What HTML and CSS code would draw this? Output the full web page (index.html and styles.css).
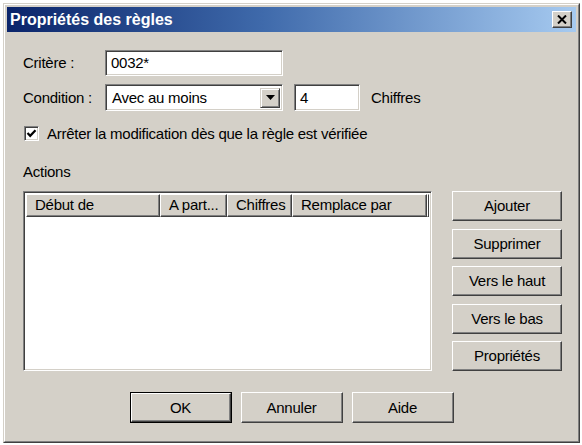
FILE: index.html
```html
<!DOCTYPE html>
<html lang="fr">
<head>
<meta charset="utf-8">
<title>Propriétés des règles</title>
<link rel="stylesheet" href="styles.css">
</head>
<body>
<div class="dialog">
  <div class="frame">
    <div class="titlebar">
      <span class="title">Propriétés des règles</span>
      <span class="close">
        <svg width="10" height="9" viewBox="0 0 10 9"><path d="M1 0.5 L9 8.5 M9 0.5 L1 8.5" stroke="#000" stroke-width="2" fill="none"/></svg>
      </span>
    </div>
    <div class="content">
      <div class="row row-critere">
        <span class="label">Critère :</span>
        <span class="field field-wide">0032*</span>
      </div>
      <div class="row row-condition">
        <span class="label">Condition :</span>
        <span class="field combo">
          <span class="combo-text">Avec au moins</span>
          <span class="combo-btn">
            <svg width="9" height="5" viewBox="0 0 9 5"><path d="M0 0 H9 L4.5 5 Z" fill="#000"/></svg>
          </span>
        </span>
        <span class="field field-num">4</span>
        <span class="unit">Chiffres</span>
      </div>
      <div class="row row-check">
        <span class="checkbox">
          <svg width="11" height="11" viewBox="0 0 11 11"><path d="M1.5 5 L4.2 7.8 L9.5 2.3" stroke="#000" stroke-width="2.2" fill="none"/></svg>
        </span>
        <span class="check-label">Arrêter la modification dès que la règle est vérifiée</span>
      </div>
      <div class="section-label">Actions</div>
      <div class="main">
        <div class="listview">
          <div class="header">
            <span class="col col1">Début de</span>
            <span class="col col2">A part...</span>
            <span class="col col3">Chiffres</span>
            <span class="col col4">Remplace par</span>
            <span class="col col-rest"></span>
          </div>
          <div class="list-body"></div>
        </div>
        <div class="side-buttons">
          <span class="btn side">Ajouter</span>
          <span class="btn side">Supprimer</span>
          <span class="btn side">Vers le haut</span>
          <span class="btn side">Vers le bas</span>
          <span class="btn side">Propriétés</span>
        </div>
      </div>
      <div class="bottom-buttons">
        <span class="btn bottom default"><span class="btn-inner">OK</span></span>
        <span class="btn bottom">Annuler</span>
        <span class="btn bottom">Aide</span>
      </div>
    </div>
  </div>
</div>
</body>
</html>
```

FILE: styles.css
```css
* { box-sizing: border-box; }

html, body {
  margin: 0;
  padding: 0;
  background: #ffffff;
}

body {
  font-family: "Liberation Sans", Arial, sans-serif;
  font-size: 15px;
  letter-spacing: -0.25px;
  color: #000;
}

.dialog {
  margin: 3px 0 0 3px;
  width: 577px;
  height: 440px;
  border: 1px solid;
  border-color: #d4d0c8 #404040 #404040 #d4d0c8;
  background: #d4d0c8;
}

.frame {
  height: 100%;
  border: 1px solid;
  border-color: #ffffff #808080 #808080 #ffffff;
  padding: 2px;
  display: flex;
  flex-direction: column;
}

.titlebar {
  height: 25px;
  flex: none;
  background: linear-gradient(to right, #0a246a 0%, #3f6aab 45%, #a6caf0 100%);
  display: flex;
  align-items: center;
  justify-content: space-between;
  padding: 0 4px 0 3px;
}

.title {
  color: #fff;
  font-weight: bold;
  font-size: 16px;
  letter-spacing: 0;
  line-height: 18px;
}

.close {
  width: 20px;
  height: 17px;
  background: #d4d0c8;
  border: 1px solid;
  border-color: #ffffff #404040 #404040 #ffffff;
  box-shadow: inset -1px -1px 0 #808080;
  display: flex;
  align-items: center;
  justify-content: center;
}

.content {
  flex: 1;
  padding: 18px 0 0 16px;
  display: flex;
  flex-direction: column;
}

.row {
  display: flex;
  align-items: center;
}

.label {
  width: 82px;
  line-height: 16px;
}

.field {
  background: #fff;
  border: 1px solid;
  border-color: #808080 #ffffff #ffffff #808080;
  box-shadow: inset 1px 1px 0 #404040, inset -1px -1px 0 #d4d0c8;
  display: flex;
  align-items: center;
  padding-left: 5px;
  line-height: 16px;
}

.row-critere { height: 26px; }
.row-critere .field { height: 26px; }
.field-wide { width: 178px; }

.row-condition { height: 27px; margin-top: 8px; }
.combo {
  width: 178px;
  height: 27px;
  padding-left: 6px;
  padding-right: 2px;
  justify-content: space-between;
}
.combo-btn {
  width: 20px;
  height: 20px;
  background: #d4d0c8;
  border: 1px solid;
  border-color: #d4d0c8 #404040 #404040 #d4d0c8;
  box-shadow: inset 1px 1px 0 #ffffff, inset -1px -1px 0 #808080;
  display: flex;
  align-items: center;
  justify-content: center;
}
.field-num {
  width: 66px;
  height: 27px;
  margin-left: 11px;
}
.unit { margin-left: 11px; line-height: 16px; }

.row-check { height: 19px; margin-top: 13px; padding-left: 1px; }
.checkbox {
  width: 15px;
  height: 15px;
  background: #fff;
  border: 1px solid;
  border-color: #808080 #ffffff #ffffff #808080;
  box-shadow: inset 1px 1px 0 #404040, inset -1px -1px 0 #d4d0c8;
  display: flex;
  align-items: center;
  justify-content: center;
}
.check-label { margin-left: 8px; line-height: 16px; }

.section-label {
  margin-top: 21px;
  line-height: 16px;
  height: 16px;
}

.main {
  margin-top: 11px;
  height: 180px;
  display: flex;
}

.listview {
  width: 409px;
  height: 180px;
  background: #fff;
  border: 1px solid;
  border-color: #808080 #ffffff #ffffff #808080;
  box-shadow: inset 1px 1px 0 #404040, inset -1px -1px 0 #d4d0c8;
  padding: 2px;
  display: flex;
  flex-direction: column;
}

.header {
  display: flex;
  height: 23px;
  flex: none;
}

.col {
  height: 23px;
  background: #d4d0c8;
  border: 1px solid;
  border-color: #ffffff #404040 #404040 #ffffff;
  box-shadow: inset -1px -1px 0 #808080;
  padding-left: 8px;
  line-height: 20px;
  white-space: nowrap;
  overflow: hidden;
}
.col1 { width: 134px; }
.col2 { width: 67px; }
.col3 { width: 65px; }
.col4 { width: 135px; }
.col-rest { flex: 1; padding: 0; }

.list-body { flex: 1; }

.side-buttons {
  margin-left: 20px;
  width: 110px;
  display: flex;
  flex-direction: column;
  justify-content: space-between;
}

.btn {
  background: #d4d0c8;
  border: 1px solid;
  border-color: #ffffff #404040 #404040 #ffffff;
  box-shadow: inset -1px -1px 0 #808080;
  display: flex;
  align-items: center;
  justify-content: center;
  line-height: 16px;
}

.side { height: 30px; width: 110px; }

.bottom-buttons {
  margin-top: 21px;
  padding-right: 16px;
  display: flex;
  justify-content: center;
  gap: 9px;
}

.bottom { width: 102px; height: 31px; }

.default {
  border: 1px solid #000;
  box-shadow: none;
  padding: 0;
}
.btn-inner {
  width: 100%;
  height: 100%;
  border: 1px solid;
  border-color: #ffffff #404040 #404040 #ffffff;
  box-shadow: inset -1px -1px 0 #808080;
  display: flex;
  align-items: center;
  justify-content: center;
}
```
